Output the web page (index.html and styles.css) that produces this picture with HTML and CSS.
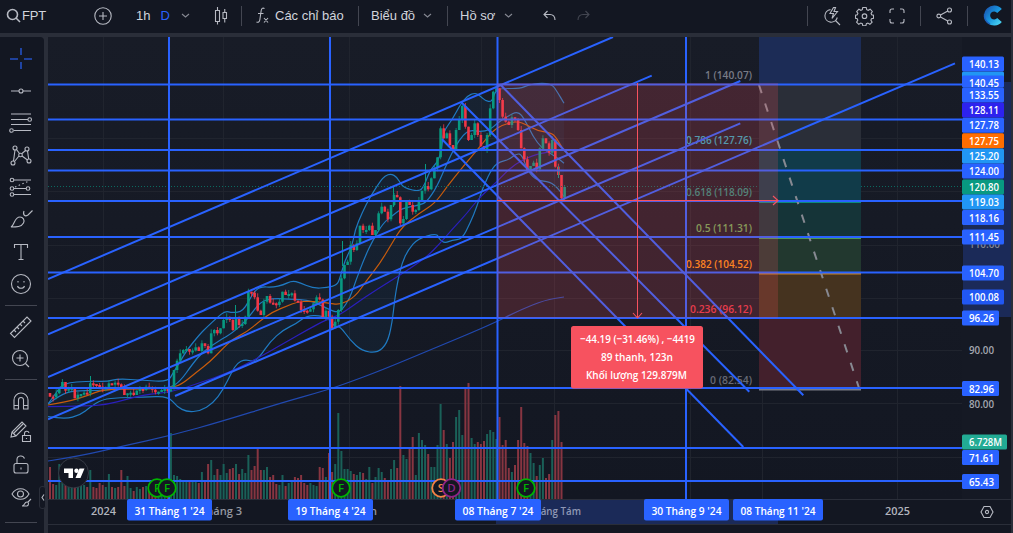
FILE: index.html
```html
<!DOCTYPE html>
<html lang="vi">
  <head>
    <meta charset="UTF-8" />
    <meta name="viewport" content="width=device-width, initial-scale=1.0" />
    <title>FPT</title>
    <link rel="stylesheet" href="styles.css">
  </head>

  <body>
    <!-- Top bar -->
    <header class="topbar">
      <div class="group symbol">
        <svg width="15" height="15" viewBox="0 0 15 15" class="bold"><circle cx="6.5" cy="6.5" r="5" /><path d="M10 10l4 4" /></svg>
        <span>FPT</span>
      </div>
      <svg class="plus" width="18" height="18" viewBox="0 0 18 18"><circle cx="9" cy="9" r="8.2" /><path d="M9 5v8M5 9h8" /></svg>
      <div class="group interval">
        <span>1h</span>
        <span class="active">D</span>
        <svg class="chevron" width="9" height="6" viewBox="0 0 9 6"><path d="M1 1l3.5 3L8 1" /></svg>
      </div>
      <svg class="bars" width="14" height="20" viewBox="0 0 14 20"><path d="M1.5 4.5h4v11h-4zM3.5 1v3.5M3.5 15.5v3M9 6.5h3.5v6H9zM10.75 3v3.5M10.75 12.5v4" /></svg>
      <i class="sep"></i>
      <div class="group indicators">
        <svg width="13" height="17" viewBox="0 0 13 17"><path d="M8.5 1.5c-2-1-3 0-3.3 2L3.8 13c-.4 2-1.6 2.8-3.3 2M2 6.5h5.5M8 11l4 4.5M12 11l-4 4.5" /></svg>
        <span>Các chỉ báo</span>
      </div>
      <i class="sep"></i>
      <div class="group layout">
        <span>Biểu đồ</span>
        <svg class="chevron" width="9" height="6" viewBox="0 0 9 6"><path d="M1 1l3.5 3L8 1" /></svg>
      </div>
      <i class="sep"></i>
      <div class="group profile">
        <span>Hồ sơ</span>
        <svg class="chevron" width="9" height="6" viewBox="0 0 9 6"><path d="M1 1l3.5 3L8 1" /></svg>
      </div>
      <svg class="undo" width="13" height="11" viewBox="0 0 13 11"><path d="M4.5 1L1 4.5 4.500 8M1 4.5h6c3 0 5 2 5 5.5" /></svg>
      <svg class="redo" width="13" height="11" viewBox="0 0 13 11"><path d="M8.5 1L12 4.5 8.500 8M12 4.5H6c-3 0-5 2-5 5.5" /></svg>
      <div class="right">
        <i class="sep"></i>
        <svg width="18" height="20" viewBox="0 0 18 20"><path d="M7.500 3.600A6.300 6.300 0 1 0 14.300 11.500M12.500 14.500L17 19M10.500 1.500L7 7.500h3.500L9 12.500l5.500-7h-3.500l1.500-4z" /></svg>
        <svg width="19" height="20" viewBox="0 0 19 20"><path d="M7.800 1.500h3.400l.5 2.200 1.500.6 2-1.100 2.100 2.300-1.200 1.900.5 1.300 1.900.5v3l-2 .5-.6 1.400 1.200 2-2.200 2.200-2-1.200-1.500.6-.5 2H7.800l-.5-2-1.500-.6-2 1.200-2.200-2.200 1.200-2-.6-1.400-1.700-.5v-3l1.800-.5.6-1.300-1.200-1.900 2.200-2.300 2 1.100 1.400-.6z" /><circle cx="9.5" cy="10.2" r="2.3" /></svg>
        <svg width="16" height="16" viewBox="0 0 16 16"><path d="M1 5V3q0-2 2-2h2M11 1h2q2 0 2 2v2M15 11v2q0 2-2 2h-2M5 15H3q-2 0-2-2v-2" /></svg>
        <i class="sep"></i>
        <svg width="17" height="18" viewBox="0 0 17 18"><circle cx="2.800" cy="9" r="1.900" /><circle cx="13.500" cy="3" r="2" /><circle cx="13.500" cy="15" r="2" /><path d="M4.500 8l7.300-4M4.500 10l7.300 4" /></svg>
        <i class="sep"></i>
        <svg width="20" height="21" viewBox="0 0 20 21">
          <defs><linearGradient id="c" x1="0" y1="0" x2="1" y2="1"><stop offset="0" stop-color="#1a60b8" /><stop offset="0.5" stop-color="#1795de" /><stop offset="1" stop-color="#43ccef" /></linearGradient></defs>
          <path class="brand" d="M16.500 6A7 7 0 1 0 16.500 15" stroke="url(#c)" />
          <path class="brand-edge" d="M1.600 9A9 9 0 0 0 7 19" />
        </svg>
      </div>
    </header>

    <main class="workspace">
      <!-- Drawing tools -->
      <nav class="tools">
        <svg class="active" viewBox="0 0 26 26"><path d="M13 2v7M13 16v7M2 13h8M16 13h8" /></svg>
        <svg viewBox="0 0 26 26"><path d="M3 13h8M15 13h8" /><circle cx="13" cy="13" r="2" /></svg>
        <svg viewBox="0 0 26 26"><path d="M3 4h20M3 9.500h17M3 14.500h20M6 20.500h17" /><circle cx="21.700" cy="9.500" r="1.800" /><circle cx="3.500" cy="20.500" r="1.800" /></svg>
        <svg viewBox="0 0 26 26"><circle cx="7" cy="5" r="2" /><circle cx="19" cy="6" r="2" /><circle cx="5" cy="20" r="2" /><circle cx="21" cy="18" r="2" /><circle cx="12.500" cy="12" r="1.800" /><path d="M7 7L5.500 18M8.500 6.500l3 4M17.500 7.500l-3.500 3M19.500 8l1.200 8M14 13l5.500 4M11 13l-4.500 5.500" /></svg>
        <svg viewBox="0 0 26 26"><path d="M6 5h17M6 13.500h12M6 19.500h17" /><path d="M7 12L21 6" stroke-dasharray="1.500 2.500" /><circle cx="4" cy="5" r="1.800" /><circle cx="4" cy="13.500" r="1.800" /><circle cx="4" cy="19.500" r="1.800" /><circle cx="20" cy="13.500" r="1.800" /></svg>
        <svg viewBox="0 0 26 26"><path d="M3 20c4-2 3-10 9-10 3 0 5 3 3.500 6-2 4-7 4-12.500 4zM16 4c-1.500 4 1 6 4 4l4.500-4.500" /></svg>
        <svg viewBox="0 0 26 26"><path d="M6.500 9V5.500h13V9M13 5.500v15M10.500 20.500h5" /></svg>
        <svg viewBox="0 0 26 26"><circle cx="13" cy="13" r="9.500" /><path d="M9.500 15c1 3 6 3 7 0M10 10v1.500M16 10v1.500" /></svg>
        <i class="line"></i>
        <svg viewBox="0 0 26 26"><path d="M2.500 19.500L19 3l4 4L6.500 23.500zM6 16l2 2M9 13l2 2M12 10l2 2M15 7l2 2" /></svg>
        <svg viewBox="0 0 26 26"><circle cx="12" cy="12" r="7.500" /><path d="M12 8.500v7M8.500 12h7M17.500 17.500l3.500 3.500" /></svg>
        <i class="line"></i>
        <svg viewBox="0 0 26 26"><path d="M6 21V12a7 7 0 0 1 14 0v9h-4.500v-9a2.500 2.500 0 0 0-5 0v9zM6 17.500h4.500M15.500 17.500H20" /></svg>
        <svg viewBox="0 0 26 26"><path d="M3 17l1-5L14 2l4 4L8 16zM6 13l9-9M4 12l4 4M14.500 15.500h8v6h-8zM16.500 15.500v-2c0-3 4-3 4.500-.5M18.500 18v1" /></svg>
        <svg viewBox="0 0 26 26"><rect x="6" y="11.500" width="14" height="9.500" rx="2" /><path d="M9 11.500V7.500c0-4 6-5 7.500-1M13 15.500v2" /></svg>
        <svg viewBox="0 0 26 26"><path d="M4 10c4-7 13-7 17 0-4 7-13 7-17 0zM14 22c3 0 2-4 5-4 2 0 2 3 0 4zM20 18l3-3" /><circle cx="12.500" cy="10" r="3" /></svg>
        <i class="line last"></i>
        <span class="toggle"><svg width="4" height="7" viewBox="0 0 4 7"><path d="M3 .5L1 3.500l2 3" /></svg></span>
      </nav>

      <!-- Chart, price scale and time scale -->
      <section class="chart">
        <svg id="plot" width="914" height="462" viewBox="48 37 914 462"></svg>
        <svg id="prices" width="49" height="462" viewBox="962 37 49 462"></svg>
        <svg id="times" width="914" height="25" viewBox="48 499 914 25"></svg>
        <div class="corner">
          <svg width="14" height="14" viewBox="0 0 14 14"><path d="M4 1.500h6L13 7l-3 5.500H4L1 7z" /><circle cx="7" cy="7" r="1.600" /></svg>
        </div>
        <footer class="bottom"></footer>
      </section>
    </main>
    <script src="script.js"></script>
  </body>
</html>
```
FILE: styles.css
```css
* {
  box-sizing: border-box;
}

body {
  margin: 0;
  width: 1013px;
  height: 533px;
  overflow: hidden;
  display: flex;
  flex-direction: column;
  background-color: #2a2e39;
  color: #d1d4dc;
  font-family: "Liberation Sans", Arial, sans-serif;
  font-size: 13px;
}

svg {
  display: block;
  flex: none;
  fill: none;
  stroke: #b7bac3;
  stroke-width: 1.1;
}

.topbar {
  display: flex;
  align-items: center;
  height: 33px;
  width: 1011px;
  padding: 0 8px 2px 6px;
  background-color: #131722;
}

.group {
  display: flex;
  align-items: center;
  white-space: nowrap;
}

.symbol {
  width: 88px;
  gap: 1px;
  letter-spacing: -0.2px;
}

.bold {
  stroke-width: 1.6;
}

.interval {
  margin-left: 24px;
  width: 78px;
}

.interval .active {
  color: #2962ff;
  margin-left: 10px;
  margin-right: 11px;
}

.chevron {
  stroke: #868993;
}

.sep {
  width: 1px;
  height: 20px;
  background-color: #434651;
}

.bars {
  margin-right: 13px;
}

.indicators {
  width: 116px;
  padding-left: 14px;
  gap: 6px;
}

.layout {
  width: 88px;
  padding-left: 12px;
  justify-content: space-between;
  padding-right: 15px;
}

.profile {
  width: 65px;
  padding-left: 12px;
  justify-content: space-between;
}

.undo {
  margin-left: 30px;
}

.redo {
  margin-left: 21px;
  stroke: #434651;
}

.right {
  margin-left: auto;
  display: flex;
  align-items: center;
  width: 196px;
  justify-content: space-between;
}

.brand {
  stroke-width: 6;
}

.brand-edge {
  stroke: #1e62bf;
  stroke-width: 1.5;
}

.workspace {
  display: flex;
  flex: 1;
  padding-top: 4px;
}

.tools {
  position: relative;
  width: 44px;
  display: flex;
  flex-direction: column;
  align-items: center;
  padding: 9px 3px 0 0;
  background-color: #131722;
  border-top-right-radius: 4px;
}

.tools > svg {
  width: 26px;
  height: 26px;
  margin-bottom: 6.2px;
}

.tools .active {
  stroke: #2450c4;
  stroke-width: 1.6;
}

.line {
  width: 32px;
  height: 1px;
  margin: 1px 0 8px;
  background-color: #434651;
  flex: none;
}

.last {
  margin-top: 5px;
}

.toggle {
  position: absolute;
  right: -2px;
  top: 449px;
  width: 7px;
  height: 23px;
  border: 1px solid #2a2e39;
  border-radius: 3px;
  background-color: #131722;
  display: flex;
  align-items: center;
  justify-content: center;
}

.chart {
  margin-left: 4px;
  display: grid;
  grid-template-columns: 914px 49px;
  grid-template-rows: 462px 25px 9px;
  background-color: #131722;
}

.corner {
  display: flex;
  align-items: center;
  padding-left: 18px;
  border-top: 1px solid #2a2e39;
}

.bottom {
  grid-column: 1 / 3;
  border-top: 1px solid #2a2e39;
}

#plot text,
#prices text,
#times text {
  stroke: none;
  font-family: "Open Sans", "Noto Sans", sans-serif;
  font-size: 11.5px;
  font-weight: 600;
}
```
FILE: script.js
```js
const BLUE = "#2962ff";
const UP = "#089981";
const DOWN = "#f23645";

const plot = document.getElementById("plot");
const prices = document.getElementById("prices");
const times = document.getElementById("times");

function add(parent, name, attrs, text) {
  const el = document.createElementNS("http://www.w3.org/2000/svg", name);
  for (const key in attrs) el.setAttribute(key, attrs[key]);
  if (text) el.textContent = text;
  parent.appendChild(el);
  return el;
}

function rect(parent, x, y, width, height, fill, rx = 0) {
  return add(parent, "rect", { x, y, width, height, fill, rx, stroke: "none" });
}

function line(x1, y1, x2, y2, stroke, width = 1) {
  return add(plot, "line", { x1, y1, x2, y2, stroke, "stroke-width": width });
}

// text squeezed into the given width
function label(parent, x, y, width, text, fill) {
  add(parent, "text", { x, y, fill, textLength: width, lengthAdjust: "spacingAndGlyphs" }, text);
}

// background and grid
const bg = add(plot, "linearGradient", { id: "bg", x1: 0, y1: 0, x2: 0, y2: 1 });
add(bg, "stop", { offset: 0, "stop-color": "#181c27" });
add(bg, "stop", { offset: 1, "stop-color": "#131722" });
rect(plot, 48, 37, 914, 462, "url(#bg)");
[103, 223, 349, 481, 554, 690, 762, 897].forEach((x) => rect(plot, x, 37, 1, 462, "#20242e"));
[138, 191, 245, 298, 350, 403, 457].forEach((y) => rect(plot, 48, y, 914, 1, "#20242e"));

// candle closes, as y positions
const closes = [
  396.7, 397.3, 393.3, 387.7, 382, 390.7, 388.7, 388, 398.3, 394.7, 394, 392.7, 393.3, 383.3, 384, 385, 386.7, 389.3, 387.3, 383.3,
  384, 382.7, 384.3, 387.3, 395, 393.3, 392.7, 395, 390.7, 389, 390, 386.7, 387.3, 389.7, 392.3, 391.7, 390, 389, 390, 389.3,
  370, 360.7, 353.3, 350, 349, 351.7, 350.5, 347.3, 351, 343.3, 346, 353.3, 333.3, 330, 333.3, 328.3, 320, 317.3, 320, 330,
  318.3, 325, 324, 316.7, 291.7, 292.7, 297.3, 310.7, 315, 301.7, 296, 302.7, 303.3, 305, 301.7, 291.7, 295, 294, 293.3, 300.7,
  301.7, 310, 310.7, 311.7, 309.3, 303.3, 297.3, 299.5, 317.3, 310.7, 316.7, 328.3, 321.7, 310, 278.3, 265, 261.7, 245, 250, 243.3,
  225.7, 230, 230, 225.7, 235, 230, 213.3, 206.7, 211.7, 219.3, 205, 195, 197.3, 223.3, 219, 201.7, 205, 211.7, 210, 200,
  190.7, 186, 189.3, 178.3, 168.3, 157.3, 128.3, 138.3, 133.3, 145, 149.3, 130, 120, 106, 126.7, 140, 135, 123.3, 135, 146,
  150, 135, 108.3, 91.7, 88.3, 100, 116.7, 121.7, 125, 117.3, 120, 130, 148.3, 159.3, 170, 166, 162.7, 169.3, 148.3, 138.3,
  143.3, 152.7, 140, 166.7, 175, 198.3, 187,
];

// volume heights
const volumes = [
  32, 15, 14, 35, 18, 22, 15, 20, 14, 18, 16, 14, 12, 29, 12, 11, 16, 14, 12, 25,
  12, 11, 12, 29, 13, 23, 11, 8, 12, 10, 12, 13, 10, 12, 11, 12, 10, 14, 16, 66,
  24, 23, 20, 18, 19, 18, 19, 17, 16, 27, 17, 35, 39, 24, 30, 24, 35, 26, 30, 31,
  35, 25, 30, 26, 44, 29, 33, 50, 29, 29, 32, 22, 24, 15, 14, 24, 13, 16, 19, 22,
  21, 24, 16, 14, 16, 14, 13, 32, 31, 22, 46, 27, 35, 86, 48, 30, 30, 28, 25, 24,
  27, 26, 20, 32, 16, 22, 31, 27, 21, 18, 30, 39, 31, 113, 44, 40, 50, 62, 24, 66,
  59, 54, 45, 32, 32, 54, 95, 69, 55, 41, 57, 82, 89, 64, 111, 116, 61, 55, 57, 55,
  58, 65, 69, 67, 60, 82, 54, 59, 31, 27, 34, 59, 92, 56, 53, 46, 36, 23, 34, 41,
  21, 25, 59, 84, 88, 57,
];

const barX = (i) => 50 + i * 3.1;

volumes.forEach((h, i) => {
  const up = closes[i] <= (closes[i - 1] || 396);
  rect(plot, barX(i) - 1, 499 - h, 2, h, up ? "#1a6058" : "#873541");
});

// bollinger bands and averages
const upper = [
  [48, 404], [56, 393], [63, 383], [90, 381], [107, 381.7], [118, 378.7], [143, 380.3], [168, 381.7], [173, 373], [180, 361.7],
  [187, 350], [200, 334], [207, 327], [217, 317.7], [225, 311], [232, 312.7], [243, 311.7], [253, 293], [260, 286.7], [273, 287.3],
  [283, 285], [292, 280.7], [300, 282.7], [313, 288.3], [327, 287.7], [337, 285], [340, 278], [345, 260], [352, 247], [355, 230],
  [362, 213], [370, 197], [380, 181.7], [385, 175.7], [391, 173.7], [397, 177], [402, 186], [408, 189], [417, 191], [423, 189],
  [430, 170], [437, 163], [442, 150], [443, 132], [452, 120], [460, 105], [467, 96], [475, 92.7], [480, 95.7], [485, 100.7],
  [492, 102], [495, 91.7], [500, 88.3], [520, 88.7], [528, 85], [540, 83], [552, 84], [558, 93], [564, 103.3],
];
const lower = [
  [48, 416.7], [65, 419.3], [80, 415], [90, 407.3], [102, 399.3], [120, 397.7], [143, 397.3], [168, 396], [177, 406.7], [187, 412],
  [200, 411], [213, 403.3], [223, 390], [232, 371.7], [237, 363.3], [245, 359.3], [253, 361.7], [260, 356.7], [270, 341.7], [283, 330],
  [297, 323.3], [307, 315.3], [323, 316], [330, 320], [335, 327.3], [340, 326], [350, 340], [362, 351], [377, 353], [387, 344],
  [392, 324], [395, 297], [398, 280], [402, 263], [408, 250], [418, 238.3], [437, 233.3], [439, 239.3], [445, 243.3], [452, 240],
  [462, 239.3], [470, 223.3], [477, 206.7], [483, 186.7], [493, 166.7], [500, 161.7], [508, 160], [517, 153.3], [522, 155], [528, 171.7],
  [537, 180.7], [550, 181.7], [558, 188.3], [564, 196.7],
];
const middle = [
  [48, 404], [60, 395], [73, 390.7], [97, 390.7], [123, 388.3], [168, 389], [180, 381.7], [193, 363.3], [203, 351.7], [220, 340],
  [232, 333.3], [247, 320], [260, 301.7], [273, 298.3], [293, 299.3], [307, 300], [317, 303.3], [330, 310], [337, 312.3], [342, 310],
  [350, 298], [356, 280], [365, 256.7], [373, 240], [383, 223.3], [393, 215], [402, 208.3], [420, 205], [427, 201.7], [437, 186.7],
  [447, 163.3], [455, 146.7], [463, 135], [470, 130], [480, 131.7], [490, 130], [497, 123.3], [507, 116.7], [518, 110.7], [525, 120],
  [533, 136.7], [542, 148.3], [550, 153.3], [558, 158.3], [564, 163.3],
];
const orange = [
  [48, 405], [67, 401.7], [87, 396], [103, 389.3], [140, 389], [173, 387.7], [183, 383.3], [197, 371.7], [210, 361.7], [223, 348.3],
  [233, 339], [247, 331.7], [260, 321], [273, 311.7], [287, 306], [297, 302], [310, 301], [327, 302.7], [340, 305], [355, 297],
  [367, 280], [380, 263.3], [392, 243.3], [402, 226.7], [420, 212.7], [435, 203.3], [447, 186.7], [463, 166.7], [480, 146.7], [492, 131.7],
  [502, 125], [517, 121], [527, 125], [537, 130.7], [550, 132.7], [555, 136], [562, 147.3],
];
const indigo = [
  [48, 406.7], [90, 406], [107, 404.3], [127, 399.3], [143, 395], [173, 391.7], [200, 382.7], [227, 373.3], [253, 360.7], [287, 341.7],
  [307, 330], [327, 319.3], [340, 315], [365, 297], [392, 280], [408, 270], [427, 256.7], [440, 243.3], [453, 228.3], [467, 213.3],
  [480, 196.7], [497, 181.7], [513, 165], [533, 155], [550, 151.7], [560, 150],
];
const longAverage = [
  [48, 461], [80, 456], [120, 446.7], [173, 435], [223, 421], [280, 403.3], [327, 390], [350, 382], [382, 370], [430, 350],
  [490, 325], [520, 310], [545, 300], [564, 297],
];

// smooth path through the midpoints of the given points
function smooth(points) {
  let d = "M" + points[0];
  for (let i = 1; i < points.length - 1; i++) {
    const [x, y] = points[i];
    const [nx, ny] = points[i + 1];
    d += `Q${x} ${y} ${(x + nx) / 2} ${(y + ny) / 2}`;
  }
  return d + "L" + points[points.length - 1];
}

function curve(points, stroke) {
  add(plot, "path", { d: smooth(points), stroke, fill: "none", "stroke-width": 1.2 });
}

add(plot, "path", {
  d: smooth(upper) + smooth([...lower].reverse()).replace("M", "L") + "Z",
  fill: "rgba(33, 150, 243, 0.06)",
  stroke: "none",
});
curve(upper, "#1f7ac2");
curve(lower, "#1f7ac2");
curve(middle, "#1f7ac2");
curve(orange, "#c95c0c");
curve(indigo, "#2a1fbd");
curve(longAverage, "#2149b0");

closes.forEach((close, i) => {
  const open = i ? closes[i - 1] : 393;
  const color = close <= open ? UP : DOWN;
  const top = Math.min(open, close);
  const height = Math.max(Math.abs(open - close), 2);
  const wick = rect(plot, barX(i) - 0.5, top - ((i * 7) % 5), 1, height + ((i * 7) % 5) + ((i * 3) % 4), color);
  wick.setAttribute("opacity", 0.8);
  rect(plot, barX(i) - 1.3, top, 2.6, height, color);
});

// single long wicks
rect(plot, 90, 376, 1, 8, UP);
rect(plot, 235, 305, 1, 16, UP);
rect(plot, 342, 241, 1, 25, UP);
rect(plot, 425, 164, 1, 24, UP);
rect(plot, 558, 166, 1, 12, UP);
rect(plot, 393, 187, 1, 20, UP);

// last price
add(plot, "line", { x1: 48, y1: 186.5, x2: 962, y2: 186.5, stroke: "#0b6a60", "stroke-dasharray": "1 2" });

// fibonacci zones
[
  [37, 48, "#1c2c56"],
  [85, 65, "#2a2e38"],
  [150, 52, "#113b49"],
  [202, 36, "#153438"],
  [238, 35, "#22382f"],
  [273, 45, "#45331f"],
  [318, 71, "#43202c"],
].forEach(([y, h, color]) => rect(plot, 759, y, 102, h, color));
rect(plot, 759, 201, 102, 2, "#0b8c7c");
rect(plot, 759, 237, 102, 2, "#4c9a55");
rect(plot, 759, 272.5, 102, 2, "#c98322");
rect(plot, 759, 388, 102, 2.5, "#787b86");
add(plot, "line", { x1: 759, y1: 85, x2: 859, y2: 388, stroke: "#878992", "stroke-width": 2, "stroke-dasharray": "8.5 11" });

[
  [705, 79, 47, "1 (140.07)", "#787b86"],
  [686, 144, 66, "0.786 (127.76)", "#2eabc0"],
  [686, 196, 66, "0.618 (118.09)", "#2c8f80"],
  [696, 232, 56, "0.5 (111.31)", "#6cab58"],
  [686, 268, 66, "0.382 (104.52)", "#ff9013"],
  [690, 313, 62, "0.236 (96.12)", "#e33848"],
  [710, 384, 42, "0 (82.54)", "#676a75"],
].forEach(([x, y, width, text, color]) => label(plot, x, y, width, text, color));

// drawn lines
[84.5, 119.5, 150, 170.5, 201, 237, 272.5, 318, 388, 448, 481].forEach((y) => line(48, y, 962, y, BLUE, 2));
[169, 330, 497.5, 686].forEach((x) => line(x, 37, x, 499, BLUE, 2));
[
  [48, 279, 613, 37],
  [48, 334.3, 651.7, 75.7],
  [48, 377, 740.3, 81],
  [48, 419.3, 740.3, 123.3],
  [175, 396, 955, 63.3],
  [500, 84.3, 803.3, 395.3],
  [461.3, 102.3, 749.3, 391.7],
  [442, 139.3, 743.3, 447],
].forEach(([x1, y1, x2, y2]) => line(x1, y1, x2, y2, BLUE, 2));

// measured range
rect(plot, 497, 83, 281, 235, "rgba(247, 82, 95, 0.2)");
line(497, 200.5, 778, 200.5, "#f7525f", 1.2);
line(637.5, 83, 637.5, 317, "#f7525f", 1);
add(plot, "path", { d: "M773 196l5 4.5-5 4.5M633 313l4.5 5 4.5-5", stroke: "#f7525f" });

rect(plot, 571, 326, 132, 62.5, "#f7525f", 2.5);
label(plot, 580, 343, 115, "−44.19 (−31.46%) , −4419", "#fff");
label(plot, 601, 361, 72, "89 thanh, 123n", "#fff");
label(plot, 586, 379, 101, "Khối lượng 129.879M", "#fff");

// event badges
function badge(x, letter, color) {
  add(plot, "circle", { cx: x, cy: 488, r: 8.8, fill: "#131722", stroke: color, "stroke-width": 1.8 });
  add(plot, "text", { x, y: 492, fill: color, "text-anchor": "middle" }, letter);
}
badge(157, "F", "#00b400");
badge(167, "F", "#00b400");
badge(341, "F", "#00b400");
badge(441, "S", "#f58345");
badge(451.5, "D", "#8f2387");
badge(526, "F", "#00b400");

// logo
add(plot, "circle", { cx: 73.5, cy: 473, r: 15, fill: "#131722", stroke: "#363a45", "stroke-width": 1 });
add(plot, "path", { d: "M64 468.5h9v9.500h-4.500v-5H64zM79.500 468.500h5l-4 9.500h-5z", fill: "#fff", stroke: "none" });
add(plot, "circle", { cx: 76.5, cy: 470.7, r: 2.2, fill: "#fff", stroke: "none" });

// price scale
rect(prices, 962, 37, 49, 462, "#151924");
rect(prices, 963, 82, 48, 235, "#1b2a58");
label(prices, 969, 248, 31, "110.00", "#868993");
label(prices, 969, 354, 25, "90.00", "#a4a7b0");
label(prices, 969, 408, 25, "80.00", "#a4a7b0");
[
  [79, 42, "", "#2196f3"],
  [64, 42, "140.13", BLUE],
  [95, 42, "133.55", BLUE],
  [83, 42, "140.45", BLUE],
  [110, 42, "128.11", "#2d22ee"],
  [125.3, 42, "127.78", BLUE],
  [140.7, 42, "127.75", "#ff6d00"],
  [156, 42, "125.20", "#2196f3"],
  [171, 42, "124.00", BLUE],
  [187, 42, "120.80", UP],
  [202, 42, "119.03", "#2196f3"],
  [217.5, 42, "118.16", BLUE],
  [237, 42, "111.45", BLUE],
  [273, 42, "104.70", BLUE],
  [297, 42, "100.08", "#2157f3"],
  [318, 37, "96.26", BLUE],
  [388.5, 37, "82.96", BLUE],
  [442, 45, "6.728M", "#22ab94"],
  [457.5, 37, "71.61", BLUE],
  [481.5, 37, "65.43", BLUE],
].forEach(([y, width, text, color]) => {
  // 140.45 sits on top of 133.55, so only its upper part gets a box
  rect(prices, 962, y - 7.5, width, text === "140.45" ? 12 : 15, color, 1.5);
  if (text) label(prices, 969, y + 4, width - 12, text, "#fff");
});

// time scale
rect(times, 48, 499, 914, 1, "#2a2e39");
rect(times, 496, 500, 282, 24, "#1b2a58");
label(times, 91, 515, 25, "2024", "#b2b5be");
label(times, 200, 515, 42, "Tháng 3", "#9598a1");
label(times, 370, 515, 7, "n", "#9598a1");
label(times, 529, 515, 52, "Tháng Tám", "#8f98b5");
label(times, 885, 515, 25, "2025", "#b2b5be");
[
  [127, 85, "31 Tháng 1 '24"],
  [288, 85, "19 Tháng 4 '24"],
  [455, 86, "08 Tháng 7 '24"],
  [644, 85, "30 Tháng 9 '24"],
  [733, 90, "08 Tháng 11 '24"],
].forEach(([x, width, text]) => {
  rect(times, x, 499, width, 21.5, BLUE, 2);
  label(times, x + 7.5, 515, width - 15, text, "#fff");
});
```
